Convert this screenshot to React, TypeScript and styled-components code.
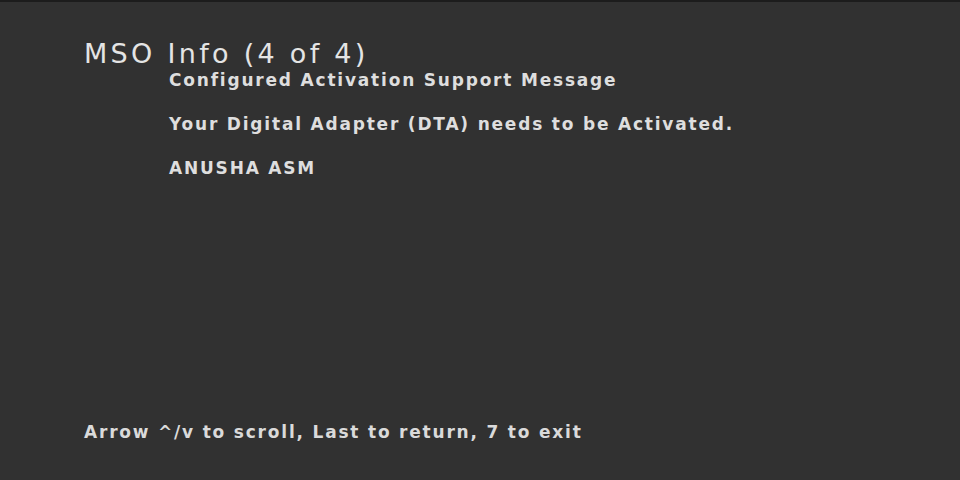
import React from "react";
import styled, { createGlobalStyle } from "styled-components";

const Global = createGlobalStyle`
  html, body { margin: 0; padding: 0; background: #303030; }
  #root { width: 960px; height: 480px; }
`;

const Screen = styled.div`
  width: 960px;
  height: 480px;
  box-sizing: border-box;
  background: #313131;
  border-top: 2px solid #1c1c1c;
  display: flex;
  flex-direction: column;
  font-family: "DejaVu Sans", sans-serif;
  color: #e2e2e2;
  padding: 38px 0 0 84px;
  overflow: hidden;
`;

const Title = styled.h1`
  margin: 0;
  font-size: 27px;
  font-weight: normal;
  line-height: 28px;
  letter-spacing: 3.3px;
  color: #e4e4e4;
`;

const Body = styled.div`
  display: flex;
  flex-direction: column;
  gap: 24px;
  padding-left: 85px;
  margin-top: 2px;
  flex: 1;
`;

const Line = styled.p`
  margin: 0;
  font-size: 17px;
  font-weight: bold;
  line-height: 20px;
  letter-spacing: 1.8px;
  color: #dedede;
`;

const Footer = styled.div`
  font-size: 17px;
  font-weight: bold;
  line-height: 20px;
  letter-spacing: 1.8px;
  color: #dadada;
  margin-bottom: 38px;
`;

export default function App() {
  return (
    <>
      <Global />
      <Screen>
        <Title>MSO Info (4 of 4)</Title>
        <Body>
          <Line>Configured Activation Support Message</Line>
          <Line>Your Digital Adapter (DTA) needs to be Activated.</Line>
          <Line>ANUSHA ASM</Line>
        </Body>
        <Footer>Arrow ^/v to scroll, Last to return, 7 to exit</Footer>
      </Screen>
    </>
  );
}
